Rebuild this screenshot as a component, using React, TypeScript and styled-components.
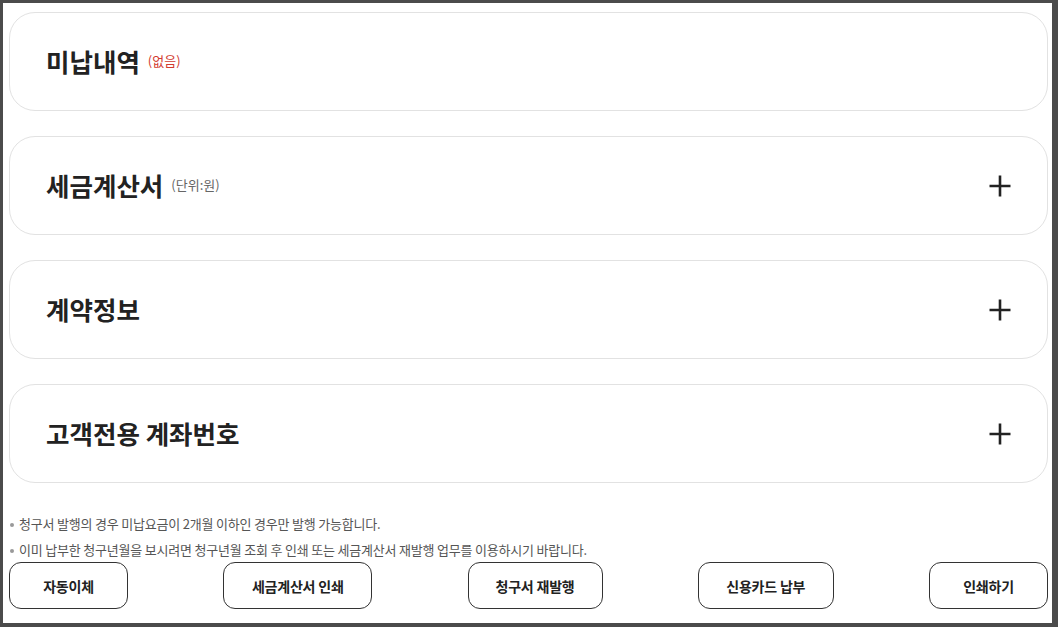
import { createGlobalStyle } from "styled-components";
import styled from "styled-components";

const GlobalStyle = createGlobalStyle`
  html, body {
    margin: 0;
    padding: 0;
    background: #4b4b4b;
  }
  * {
    box-sizing: border-box;
  }
  body {
    font-family: "Noto Sans CJK KR", "Noto Sans", sans-serif;
    color: #222;
  }
`;

const Frame = styled.div`
  width: 1058px;
  height: 627px;
  border-style: solid;
  border-color: #4b4b4b;
  border-width: 3px 6px 4px 3px;
  background: #fff;
  overflow: hidden;
`;

const Content = styled.div`
  padding: 9px 4px 0 6px;
  display: flex;
  flex-direction: column;
`;

const CardList = styled.div`
  display: flex;
  flex-direction: column;
  gap: 25px;
`;

const Card = styled.div`
  height: 99px;
  border: 1px solid #e2e2e2;
  border-radius: 26px;
  display: flex;
  align-items: center;
  justify-content: space-between;
  padding: 0 35px 0 36px;
`;

const TitleRow = styled.div`
  display: flex;
  align-items: center;
  gap: 8px;
  margin-top: -3px;
`;

const Title = styled.h2`
  margin: 0;
  font-size: 25.5px;
  font-weight: 700;
  letter-spacing: 0;
  color: #222;
`;

const Sub = styled.span<{ $red?: boolean }>`
  font-size: 13px;
  color: ${(p) => (p.$red ? "#d23a2e" : "#666")};
  letter-spacing: 0;
`;

const PlusButton = styled.button`
  width: 24px;
  height: 24px;
  padding: 0;
  border: none;
  background: none;
  display: flex;
  align-items: center;
  justify-content: center;
  cursor: pointer;
`;

const Notes = styled.ul`
  list-style: none;
  margin: 28px 0 0;
  padding: 0;
`;

const Note = styled.li`
  position: relative;
  padding-left: 10px;
  font-size: 13px;
  line-height: 26px;
  color: #555;
  letter-spacing: -0.2px;

  &::before {
    content: "";
    position: absolute;
    left: 1px;
    top: 12px;
    width: 4px;
    height: 4px;
    border-radius: 50%;
    background: #999;
  }
`;

const ButtonRow = styled.div`
  display: flex;
  justify-content: space-between;
  margin-top: -1px;
`;

const ActionButton = styled.button<{ $w: number }>`
  width: ${(p) => p.$w}px;
  height: 47px;
  border: 1px solid #333;
  border-radius: 12px;
  background: #fff;
  font-family: inherit;
  font-size: 14px;
  font-weight: 700;
  letter-spacing: -0.2px;
  color: #222;
  cursor: pointer;
`;

const Plus = () => (
  <svg width="22" height="22" viewBox="0 0 22 22">
    <path d="M11 0.5v21M0.5 11h21" stroke="#222" strokeWidth="2.6" />
  </svg>
);

const sections = [
  { title: "미납내역", sub: "(없음)", red: true, expand: false },
  { title: "세금계산서", sub: "(단위:원)", red: false, expand: true },
  { title: "계약정보", expand: true },
  { title: "고객전용 계좌번호", expand: true },
];

const actions = [
  { label: "자동이체", w: 119 },
  { label: "세금계산서 인쇄", w: 149 },
  { label: "청구서 재발행", w: 135 },
  { label: "신용카드 납부", w: 136 },
  { label: "인쇄하기", w: 119 },
];

const App = () => {
  return (
    <>
      <GlobalStyle />
      <Frame>
        <Content>
          <CardList>
            {sections.map((s) => (
              <Card key={s.title}>
                <TitleRow>
                  <Title>{s.title}</Title>
                  {s.sub && <Sub $red={s.red}>{s.sub}</Sub>}
                </TitleRow>
                {s.expand && (
                  <PlusButton aria-label="펼치기">
                    <Plus />
                  </PlusButton>
                )}
              </Card>
            ))}
          </CardList>
          <Notes>
            <Note>청구서 발행의 경우 미납요금이 2개월 이하인 경우만 발행 가능합니다.</Note>
            <Note>
              이미 납부한 청구년월을 보시려면 청구년월 조회 후 인쇄 또는 세금계산서 재발행 업무를 이용하시기 바랍니다.
            </Note>
          </Notes>
          <ButtonRow>
            {actions.map((a) => (
              <ActionButton key={a.label} $w={a.w}>
                {a.label}
              </ActionButton>
            ))}
          </ButtonRow>
        </Content>
      </Frame>
    </>
  );
};

export default App;
